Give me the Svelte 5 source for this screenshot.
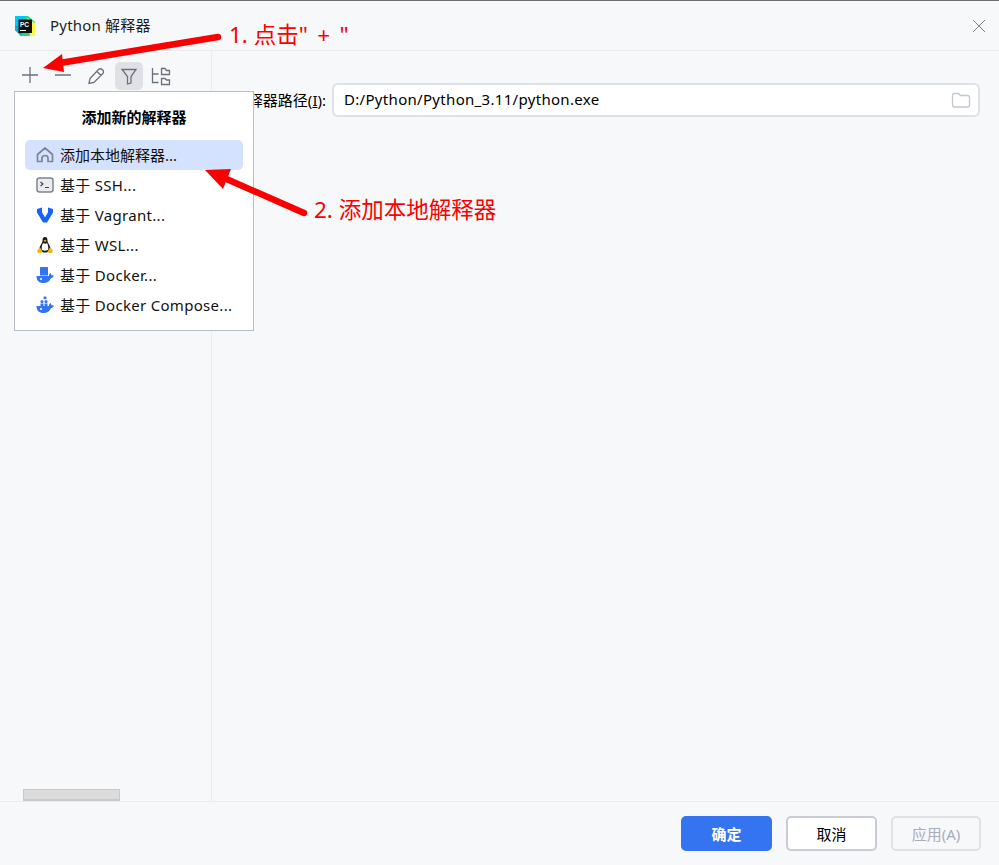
<script>
  const items = [
    { icon: 'home', label: '添加本地解释器...', active: true },
    { icon: 'ssh', label: '基于 SSH...' },
    { icon: 'vagrant', label: '基于 Vagrant...' },
    { icon: 'linux', label: '基于 WSL...' },
    { icon: 'docker', label: '基于 Docker...' },
    { icon: 'compose', label: '基于 Docker Compose...' }
  ];
</script>

<div class="dialog">
  <header class="title">
    <svg class="logo" width="20" height="20" viewBox="0 0 20 20">
      <path d="M0 0H13L20 6V20H6L0 14Z" fill="#21d789" />
      <path d="M0 0H11L8 10L0 15Z" fill="#07c3f2" />
      <path d="M12 2L20 7V20H15Z" fill="#fcf84a" />
      <path d="M6 20L0 14V9L9 13Z" fill="#12a8c9" />
      <rect x="3.500" y="3.500" width="13.500" height="13.500" fill="#111" />
      <text x="5" y="10.500" class="logo-text">PC</text>
      <rect x="5" y="14" width="6" height="1" fill="#fff" />
    </svg>
    <span>Python 解释器</span>
    <svg class="close" width="14" height="14" viewBox="0 0 14 14">
      <path d="M1 1L13 13M13 1L1 13" stroke="#7f8287" stroke-width="1" fill="none" />
    </svg>
  </header>

  <div class="body">
    <aside class="side">
      <div class="tools">
        <svg class="tool" width="28" height="28" viewBox="0 0 28 28"><path d="M14 5V21M6 13H22" /></svg>
        <svg class="tool" width="28" height="28" viewBox="0 0 28 28"><path d="M6 13H22" /></svg>
        <svg class="tool" width="28" height="28" viewBox="0 0 28 28"><path d="M7 21.500L8 16.500L16.500 7.500C17.500 6.500 19 6.500 20.500 7.800C21.800 9 21.800 10.500 20.800 11.500L12 20.500Z M15 9.500L19 13.500" /></svg>
        <svg class="tool on" width="28" height="28" viewBox="0 0 28 28"><path d="M7 7.500H21L16 14.500V21L12.500 22V14.500Z" /></svg>
        <svg class="tool" width="28" height="28" viewBox="0 0 28 28"><path d="M6.500 6V20.500H12.500M6.500 12H12.500M15.500 6.500H19L20.500 8.500H23.500V12.500H15.500ZM15.500 16.500H19L20.500 18H23.500V22.500H15.500Z" /></svg>
      </div>
      <div class="scroll"></div>
    </aside>

    <main class="form">
      <label class="field">
        <span class="field-label">解释器路径(<u>I</u>):</span>
        <span class="input">
          <span class="path">D:/Python/Python_3.11/python.exe</span>
          <svg width="20" height="18" viewBox="0 0 20 18">
            <path d="M1.500 4.500C1.500 3 2.300 2.500 3.500 2.500H7.500L9.500 4.500H16.500C17.800 4.500 18.500 5.300 18.500 6.500V14C18.500 15.200 17.800 16 16.500 16H3.500C2.300 16 1.500 15.200 1.500 14Z" fill="none" stroke="#c4c7d2" stroke-width="1.300" />
          </svg>
        </span>
      </label>
    </main>
  </div>

  <footer class="foot">
    <button class="btn primary">确定</button>
    <button class="btn">取消</button>
    <button class="btn off">应用(A)</button>
  </footer>

  <div class="menu">
    <div class="menu-head">添加新的解释器</div>
    {#each items as it}
      <div class="item" class:active={it.active}>
        <svg width="18" height="18" viewBox="0 0 18 18">
          {#if it.icon === 'home'}
            <path d="M1.500 8.500L9 2L16.500 8.500V15.500H12V12C12 10.200 10.500 9.500 9 9.500C7.500 9.500 6 10.200 6 12V15.500H1.500Z" fill="none" stroke="#7f8492" stroke-width="1.700" stroke-linejoin="round" />
          {:else if it.icon === 'ssh'}
            <rect x="1" y="2" width="16" height="14" rx="2.500" fill="#ebecf0" stroke="#7f8492" stroke-width="1.500" />
            <path d="M4.500 6L7 8L4.500 10M9 11.500H13" fill="none" stroke="#3d4150" stroke-width="1.100" />
          {:else if it.icon === 'vagrant'}
            <path d="M1 3L6 1.500V6L9 11L12 6V1.500L17 3V6.500L11 16.500H7L1 6.500Z" fill="#1563ff" />
            <path d="M6 1.500L8 3V7L9 8.500L10 7V3L12 1.500V6L9 11L6 6Z" fill="#f7faff" />
          {:else if it.icon === 'linux'}
            <path d="M9 1C6.800 1 6.500 3 6.500 5C6.500 7 3.500 9.500 3.500 13C3.500 15 6 16.500 9 16.500C12 16.500 14.500 15 14.500 13C14.500 9.500 11.500 7 11.500 5C11.500 3 11.200 1 9 1Z" fill="#1d1d1d" />
            <path d="M7 7C6 9 5.500 11 5.800 13.500C6.500 15 11.500 15 12.200 13.500C12.500 11 12 9 11 7C10 8 8 8 7 7Z" fill="#fff" />
            <path d="M7.500 4.800L9 3.800L10.500 4.800L9 6Z" fill="#f5b316" />
            <path d="M1 14.500L4 11.500L6.500 15.500L5 17H2ZM17 14.500L14 11.500L11.500 15.500L13 17H16Z" fill="#f5b316" />
          {:else}
            {#if it.icon === 'compose'}
              <rect x="7.500" y="0.500" width="3" height="2.800" rx="1" fill="#3574f0" />
              <rect x="4.500" y="4.200" width="3" height="2.800" rx="1" fill="#3574f0" />
              <rect x="8.500" y="4.200" width="3" height="2.800" rx="1" fill="#3574f0" />
              <rect x="4.500" y="7.500" width="3" height="2.800" fill="#3574f0" />
              <rect x="8.500" y="7.500" width="3" height="2.800" fill="#3574f0" />
            {:else}
              <rect x="4" y="1" width="8" height="8.500" rx="0.500" fill="#3574f0" />
            {/if}
            <path d="M0.500 10H12.800C13 8.800 13.500 7.800 14.300 7C15.200 7.800 15.500 8.700 15.600 9.500C16.300 9.100 17 9.200 17.800 9.700C17.200 11.300 16.200 12 15 12C14 15 11 17 7.500 17C3 17 0.500 14.500 0.500 10Z" fill="#3574f0" />
            <circle cx="5" cy="13" r="1" fill="#fff" />
          {/if}
        </svg>
        <span>{it.label}</span>
      </div>
    {/each}
  </div>

  <svg class="marks" width="999" height="865" viewBox="0 0 999 865">
    <path d="M218 37L60 63" stroke="#fa0000" stroke-width="6.500" stroke-linecap="round" fill="none" />
    <path d="M43 68L62 54L64 72Z" fill="#fa0000" />
    <path d="M304 213L222 177" stroke="#fa0000" stroke-width="6.500" stroke-linecap="round" fill="none" />
    <path d="M205 170L231 169L223 189Z" fill="#fa0000" />
  </svg>
  <span class="note n1">1. <span class="wide">点击" + "</span></span>
  <span class="note n2">2. 添加本地解释器</span>
</div>

<style>
  :global(body) {
    margin: 0;
    background: #f7f8fa;
  }
  .dialog {
    position: relative;
    width: 999px;
    height: 865px;
    display: flex;
    flex-direction: column;
    overflow: hidden;
    background: #f7f8fa;
    border-top: 1px solid #6f6f6f;
    box-sizing: border-box;
    color: #000;
    font-family: "Noto Sans", "Noto Sans CJK SC", sans-serif;
    font-size: 15px;
  }
  .title {
    flex: none;
    height: 49px;
    display: flex;
    align-items: center;
    gap: 15px;
    padding: 0 13px 0 15px;
    border-bottom: 1px solid #ebecf0;
    color: #1e1f22;
  }
  .title span {
    flex: 1;
    margin-top: -2px;
    letter-spacing: 0.200px;
  }
  .logo-text {
    font: 700 6.500px "Liberation Sans", sans-serif;
    fill: #fff;
  }
  .body {
    flex: 1;
    display: flex;
    min-height: 0;
  }
  .side {
    position: relative;
    flex: none;
    width: 211px;
    border-right: 1px solid #ebecf0;
    box-sizing: content-box;
  }
  .tools {
    display: flex;
    gap: 5px;
    padding: 11px 0 0 16px;
  }
  .tool {
    fill: none;
    stroke: #6c707e;
    stroke-width: 1.300;
    border-radius: 5px;
  }
  .tool:last-child { margin-left: -2px; }
  .tool.on { background: #dfe1e5; }
  .scroll {
    position: absolute;
    left: 23px;
    bottom: 0;
    width: 97px;
    height: 12px;
    background: #dcdcdd;
    border: 1px solid #c9c9c9;
    border-bottom: 2px solid #c9c9c9;
    box-sizing: border-box;
  }
  .form {
    flex: 1;
    padding: 32px 19px 0 0;
  }
  .field {
    display: flex;
    align-items: center;
    gap: 6px;
    justify-content: flex-end;
  }
  .field-label {
    white-space: nowrap;
    margin-top: -2px;
  }
  .input {
    width: 648px;
    height: 34px;
    display: flex;
    align-items: center;
    justify-content: space-between;
    padding: 0 7px 0 10px;
    background: #fff;
    border: 2px solid #dfe1e8;
    border-radius: 6px;
    box-sizing: border-box;
  }
  .path {
    margin-top: -2px;
    letter-spacing: 0.310px;
  }
  .foot {
    flex: none;
    height: 64px;
    display: flex;
    justify-content: flex-end;
    gap: 14px;
    padding: 14px 18px 0 0;
    border-top: 1px solid #ebecf0;
    box-sizing: border-box;
  }
  .btn {
    width: 91px;
    height: 35px;
    padding: 0;
    font: inherit;
    color: #000;
    background: #fff;
    border: 2px solid #c9ccd6;
    border-radius: 5px;
  }
  .btn.primary {
    color: #fff;
    font-weight: 600;
    background: #3574f0;
    border-color: #3574f0;
  }
  .btn.off {
    width: 90px;
    color: #a8adbd;
    background: transparent;
    border-color: #dfe1e5;
  }
  .menu {
    position: absolute;
    left: 14px;
    top: 90px;
    width: 240px;
    height: 240px;
    padding: 0 10px;
    background: #fff;
    border: 1px solid #b9bdc9;
    box-sizing: border-box;
  }
  .menu-head {
    height: 48px;
    line-height: 50px;
    text-align: center;
    font-weight: 700;
  }
  .item {
    height: 30px;
    display: flex;
    align-items: center;
    gap: 6px;
    padding-left: 11px;
    border-radius: 5px;
    white-space: nowrap;
    color: #111;
    letter-spacing: 0.300px;
  }
  .item span { margin-top: -2px; }
  .item.active {
    background: #d4e2ff;
    letter-spacing: 0;
  }
  .marks {
    position: absolute;
    left: 0;
    top: -1px;
    pointer-events: none;
  }
  .note {
    position: absolute;
    color: #fa0000;
    font-size: 22.500px;
    line-height: 28px;
    white-space: nowrap;
  }
  .wide { word-spacing: 3.500px; }
  .n1 { left: 229px; top: 20px; }
  .n2 { left: 314px; top: 195px; }
</style>
